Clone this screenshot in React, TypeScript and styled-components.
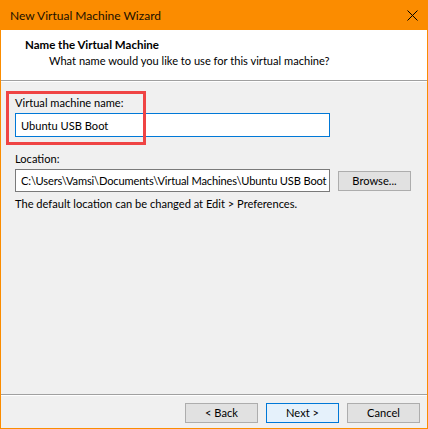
import React from "react"
import styled, { createGlobalStyle } from "styled-components"

const GlobalStyle = createGlobalStyle`
  html, body {
    margin: 0;
    padding: 0;
    background: #ffffff;
  }
  body {
    font-family: Lato, "Noto Sans", sans-serif;
    font-size: 11.1px;
    color: #000;
  }
`

const Window = styled.div`
  position: relative;
  width: 428px;
  height: 429px;
  box-sizing: border-box;
  border: 1px solid #fb8c00;
  border-top: none;
  display: flex;
  flex-direction: column;
  background: #f0f0f0;
`

const TitleBar = styled.div`
  height: 30px;
  margin: 0 -1px;
  background: #fb8c00;
  display: flex;
  align-items: center;
  justify-content: space-between;
  padding: 0 10px 0 10px;
  flex-shrink: 0;
`

const Title = styled.span`
  font-size: 12px;
  color: #1a1000;
`

const CloseButton = styled.button`
  width: 11px;
  height: 11px;
  padding: 0;
  border: none;
  background: none;
  display: flex;
  align-items: center;
  justify-content: center;
`

const Header = styled.div`
  height: 51px;
  background: #ffffff;
  padding: 7px 0 0 24px;
  box-sizing: border-box;
  border-bottom: 1px solid #a0a0a0;
  flex-shrink: 0;
`

const HeaderTitle = styled.div`
  font-weight: 700;
  font-size: 11.5px;
  line-height: 16px;
`

const HeaderSub = styled.div`
  padding-left: 24px;
  line-height: 16px;
`

const Body = styled.div`
  flex: 1;
  border-top: 1px solid #ffffff;
  padding: 13px 0 0 14px;
  position: relative;
`

const Field = styled.div`
  display: flex;
  flex-direction: column;
  margin-bottom: 14px;
`

const Label = styled.label`
  line-height: 16px;
  margin-bottom: 2px;
`

const Row = styled.div`
  display: flex;
  align-items: center;
  gap: 8px;
`

const TextBox = styled.div<{ focused?: boolean }>`
  width: 315px;
  height: ${p => (p.focused ? 24 : 23)}px;
  box-sizing: border-box;
  background: #ffffff;
  border: 1px solid ${p => (p.focused ? "#0078d7" : "#7a7a7a")};
  padding: 0 4px 0 5px;
  display: flex;
  align-items: center;
  white-space: nowrap;
  overflow: hidden;
  letter-spacing: ${p => (p.focused ? "0" : "-0.15px")};
`

const Hint = styled.div`
  line-height: 16px;
  margin-top: -10px;
`

const Button = styled.button<{ primary?: boolean }>`
  width: 73px;
  height: 20px;
  box-sizing: border-box;
  padding: 0;
  font-family: inherit;
  font-size: inherit;
  color: #000;
  background: ${p => (p.primary ? "#e5f1fb" : "#e1e1e1")};
  border: 1px solid ${p => (p.primary ? "#0078d7" : "#adadad")};
`

const Highlight = styled.div`
  position: absolute;
  left: 5px;
  top: 9px;
  width: 140px;
  height: 54px;
  box-sizing: border-box;
  border: 3px solid #ef4444;
  pointer-events: none;
`

const Footer = styled.div`
  flex-shrink: 0;
  border-top: 1px solid #a0a0a0;
  box-shadow: inset 0 1px 0 #ffffff;
  height: 34px;
  box-sizing: border-box;
  display: flex;
  justify-content: flex-end;
  align-items: center;
  gap: 8px;
  padding: 2px 7px 0 0;
`

export default function App() {
  return (
    <>
      <GlobalStyle />
      <Window>
        <TitleBar>
          <Title>New Virtual Machine Wizard</Title>
          <CloseButton aria-label="Close">
            <svg width="11" height="11" viewBox="0 0 11 11">
              <path d="M0.5 0.5 L10.5 10.5 M10.5 0.5 L0.5 10.5" stroke="#000" strokeWidth="1" />
            </svg>
          </CloseButton>
        </TitleBar>
        <Header>
          <HeaderTitle>Name the Virtual Machine</HeaderTitle>
          <HeaderSub>What name would you like to use for this virtual machine?</HeaderSub>
        </Header>
        <Body>
          <Field>
            <Label>Virtual machine name:</Label>
            <TextBox focused>Ubuntu USB Boot</TextBox>
          </Field>
          <Field>
            <Label>Location:</Label>
            <Row>
              <TextBox>C:\Users\Vamsi\Documents\Virtual Machines\Ubuntu USB Boot</TextBox>
              <Button>Browse...</Button>
            </Row>
          </Field>
          <Hint>The default location can be changed at Edit &gt; Preferences.</Hint>
          <Highlight />
        </Body>
        <Footer>
          <Button>&lt; Back</Button>
          <Button primary>Next &gt;</Button>
          <Button>Cancel</Button>
        </Footer>
      </Window>
    </>
  )
}
